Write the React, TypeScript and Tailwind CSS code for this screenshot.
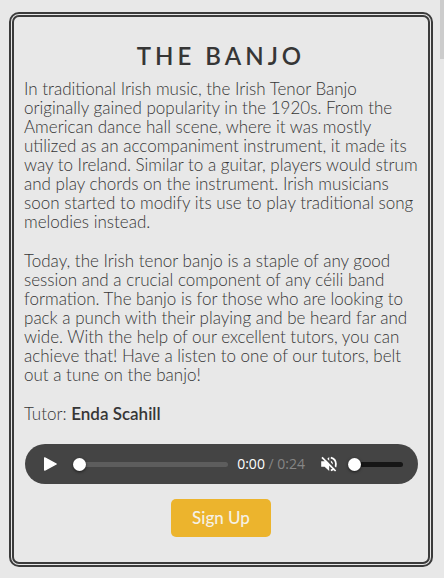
import { useState } from "react";

const rangeBase =
  "h-[13px] min-w-0 cursor-pointer appearance-none bg-transparent " +
  "[&::-webkit-slider-runnable-track]:h-[5px] [&::-webkit-slider-runnable-track]:rounded-full " +
  "[&::-webkit-slider-thumb]:-mt-1 [&::-webkit-slider-thumb]:size-[13px] [&::-webkit-slider-thumb]:appearance-none " +
  "[&::-webkit-slider-thumb]:rounded-full [&::-webkit-slider-thumb]:bg-white [&::-webkit-slider-thumb]:shadow-[0_1px_3px_rgba(0,0,0,0.6)]";

function AudioPlayer() {
  const [position, setPosition] = useState(0);
  const [volume, setVolume] = useState(0);
  return (
    <div className="flex h-10 items-center rounded-full bg-[#444444] pr-[15px] pl-[17px]">
      <button type="button" aria-label="Play" className="flex size-4 shrink-0 items-center justify-center">
        <svg viewBox="0 0 16 16" className="size-4" fill="#fff" stroke="#fff" strokeWidth="1.4" strokeLinejoin="round">
          <path d="M2.7 1.9v12.2L14.2 8z" />
        </svg>
      </button>
      <input
        type="range"
        aria-label="Seek"
        min={0}
        max={24}
        value={position}
        onChange={(e) => setPosition(Number(e.target.value))}
        className={`${rangeBase} ml-[15px] flex-1 [&::-webkit-slider-runnable-track]:bg-[#5d5d5d]`}
      />
      <p className="ml-[9px] font-['Open_Sans',sans-serif] text-sm leading-5 whitespace-nowrap text-[#868686]">
        <span className="text-white">0:00</span> / 0:24
      </p>
      <button type="button" aria-label="Unmute" className="ml-[15px] flex size-[18px] shrink-0 items-center justify-center">
        <svg viewBox="0 0 18 18" className="size-[18px]" fill="none" stroke="#fff">
          <path d="M1.2 6.2h3.4L9.2 2v14L4.6 11.8H1.2z" fill="#fff" stroke="none" />
          <path d="M10.8 5.4c2.8 1.3 2.8 5.9 0 7.2z" fill="#fff" stroke="none" />
          <path d="M10.8 2.6c6.8 1.6 6.8 11.2 0 12.8" strokeWidth="1.8" />
          <path d="M3.5 1.5 17 15" stroke="#444444" strokeWidth="2" />
          <path d="M2 2.4 15.6 16" strokeWidth="1.7" />
        </svg>
      </button>
      <input
        type="range"
        aria-label="Volume"
        min={0}
        max={100}
        value={volume}
        onChange={(e) => setVolume(Number(e.target.value))}
        className={`${rangeBase} ml-[10px] w-[55px] shrink-0 [&::-webkit-slider-runnable-track]:bg-[#161616]`}
      />
    </div>
  );
}

export default function App() {
  return (
    <div className="relative min-h-screen bg-[#e8e8e8] pt-3 pr-[11px] pb-[11px] pl-[9px] font-['Lato',sans-serif] text-[#363636]">
      <div className="absolute top-0 right-0 h-[59px] w-1 bg-[#cccccc]" />
      <main className="rounded-[10px] border-[5px] border-double border-[#3b3b3b] pt-[23px] pb-[25px]">
        <h1 className="text-center text-2xl leading-8 font-semibold tracking-[4px]">THE BANJO</h1>
        <div className="mt-[7px] flex flex-col gap-5 pr-1 pl-[10px] text-[17px] leading-[19px] font-light">
          <p>
            In traditional Irish music, the Irish Tenor Banjo originally gained popularity in the 1920s. From the
            American dance hall scene, where it was mostly utilized as an accompaniment instrument, it made its way to
            Ireland. Similar to a guitar, players would strum and play chords on the instrument. Irish musicians soon
            started to modify its use to play traditional song melodies instead.
          </p>
          <p>
            Today, the Irish tenor banjo is a staple of any good session and a crucial component of any céili band
            formation. The banjo is for those who are looking to pack a punch with their playing and be heard far and
            wide. With the help of our excellent tutors, you can achieve that! Have a listen to one of our tutors, belt
            out a tune on the banjo!
          </p>
          <p>
            Tutor: <strong className="font-semibold">Enda Scahill</strong>
          </p>
        </div>
        <div className="mt-[21px] pr-[10px] pl-[11px]">
          <AudioPlayer />
        </div>
        <div className="mt-[15px] flex justify-center">
          <button
            type="button"
            className="h-[38px] rounded-[5px] bg-[#ecb42d] px-[21px] text-[17px] font-medium text-[#f5f1e6]"
          >
            Sign Up
          </button>
        </div>
      </main>
    </div>
  );
}
